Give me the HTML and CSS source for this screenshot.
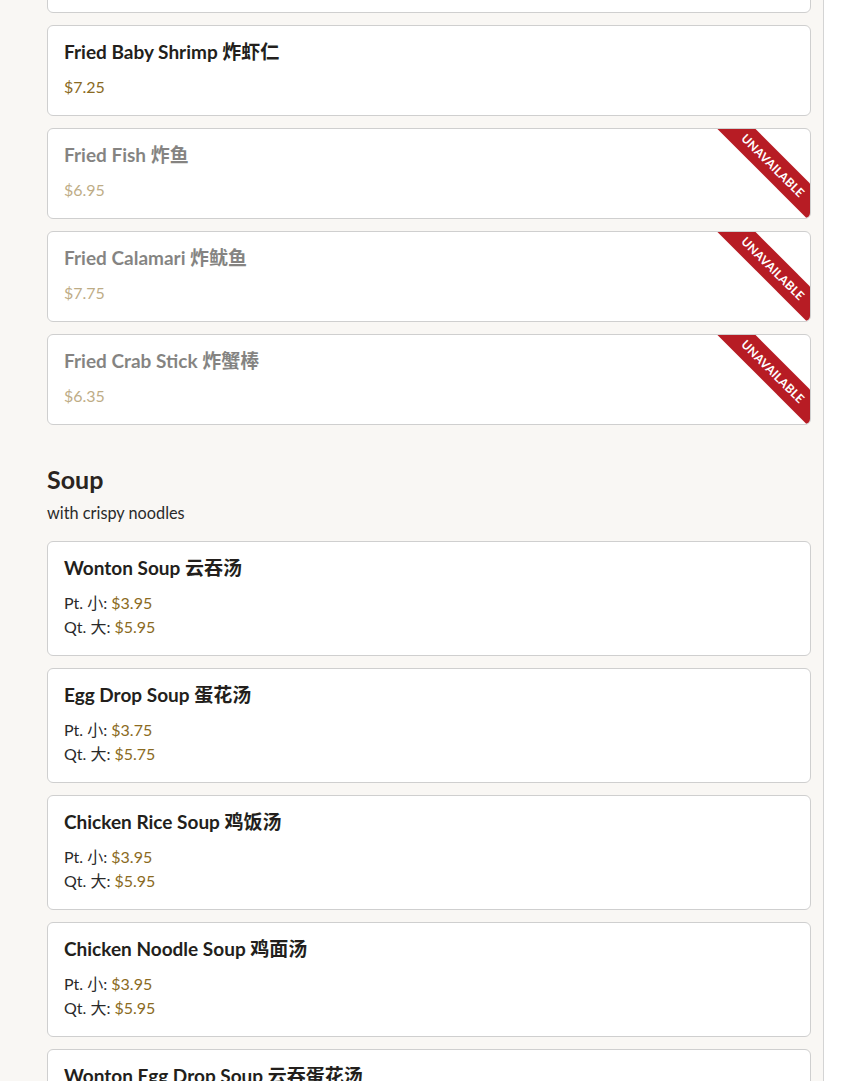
FILE: index.html
```html
<!DOCTYPE html>
<html lang="en">
<head>
<meta charset="utf-8">
<title>Menu</title>
<link rel="stylesheet" href="styles.css">
</head>
<body>
<div class="layout">
  <main class="menu">
    <div class="scroller">
      <section class="category">
        <div class="items">
          <article class="card">
            <h3 class="name">Fried Jumbo Shrimp 炸大虾</h3>
            <div class="price">$8.95</div>
          </article>
          <article class="card">
            <h3 class="name">Fried Baby Shrimp 炸虾仁</h3>
            <div class="price">$7.25</div>
          </article>
          <article class="card unavailable">
            <h3 class="name">Fried Fish 炸鱼</h3>
            <div class="price">$6.95</div>
            <span class="ribbon">Unavailable</span>
          </article>
          <article class="card unavailable">
            <h3 class="name">Fried Calamari 炸鱿鱼</h3>
            <div class="price">$7.75</div>
            <span class="ribbon">Unavailable</span>
          </article>
          <article class="card unavailable">
            <h3 class="name">Fried Crab Stick 炸蟹棒</h3>
            <div class="price">$6.35</div>
            <span class="ribbon">Unavailable</span>
          </article>
        </div>
      </section>

      <section class="category">
        <h2 class="cat-title">Soup</h2>
        <p class="cat-desc">with crispy noodles</p>
        <div class="items">
          <article class="card">
            <h3 class="name">Wonton Soup 云吞汤</h3>
            <div class="sizes">
              <div class="size">Pt. 小: <span class="amt">$3.95</span></div>
              <div class="size">Qt. 大: <span class="amt">$5.95</span></div>
            </div>
          </article>
          <article class="card">
            <h3 class="name">Egg Drop Soup 蛋花汤</h3>
            <div class="sizes">
              <div class="size">Pt. 小: <span class="amt">$3.75</span></div>
              <div class="size">Qt. 大: <span class="amt">$5.75</span></div>
            </div>
          </article>
          <article class="card">
            <h3 class="name">Chicken Rice Soup 鸡饭汤</h3>
            <div class="sizes">
              <div class="size">Pt. 小: <span class="amt">$3.95</span></div>
              <div class="size">Qt. 大: <span class="amt">$5.95</span></div>
            </div>
          </article>
          <article class="card">
            <h3 class="name">Chicken Noodle Soup 鸡面汤</h3>
            <div class="sizes">
              <div class="size">Pt. 小: <span class="amt">$3.95</span></div>
              <div class="size">Qt. 大: <span class="amt">$5.95</span></div>
            </div>
          </article>
          <article class="card">
            <h3 class="name">Wonton Egg Drop Soup 云吞蛋花汤</h3>
            <div class="sizes">
              <div class="size">Pt. 小: <span class="amt">$3.95</span></div>
              <div class="size">Qt. 大: <span class="amt">$5.95</span></div>
            </div>
          </article>
        </div>
      </section>
    </div>
  </main>
  <aside class="side"></aside>
</div>
</body>
</html>
```

FILE: styles.css
```css
* { box-sizing: border-box; }

html, body {
  margin: 0;
  padding: 0;
  height: 1081px;
  overflow: hidden;
  background: #ffffff;
  font-family: "Lato", "Noto Sans CJK SC", sans-serif;
  color: #222222;
}

.layout {
  display: grid;
  grid-template-columns: 824px 1fr;
  height: 1081px;
}

.menu {
  background: #f9f7f4;
  border-right: 1px solid #d4d4d4;
  padding: 0 12px 0 47px;
  overflow: hidden;
}

.scroller {
  margin-top: -78px;
}

.category + .category {
  padding-top: 40px;
}

.cat-title {
  margin: 0;
  font-size: 25px;
  line-height: 29px;
  font-weight: 700;
  color: #2a2420;
}

.cat-desc {
  margin: 7px 0 0;
  font-size: 16.3px;
  line-height: 24px;
  color: #2a2a2a;
}

.cat-desc + .items {
  margin-top: 16px;
}

.items {
  display: flex;
  flex-direction: column;
  gap: 12px;
}

.card {
  position: relative;
  overflow: hidden;
  background: #ffffff;
  border: 1px solid #cfcfcf;
  border-radius: 6px;
  padding: 16px;
}

.name {
  margin: 0;
  font-size: 19px;
  line-height: 20px;
  font-weight: 700;
  color: #231f1c;
}

.price {
  margin-top: 13px;
  font-size: 16px;
  line-height: 24px;
  color: #8a6a22;
}

.sizes {
  margin-top: 13px;
}

.size {
  font-size: 16px;
  line-height: 24px;
  color: #2a2a2a;
}

.amt {
  color: #8a6a22;
}

.unavailable .name,
.unavailable .price {
  opacity: 0.55;
}

.ribbon {
  position: absolute;
  top: 23px;
  right: -43px;
  width: 160px;
  height: 27px;
  line-height: 27px;
  background: #b71c24;
  color: #ffffff;
  font-size: 12px;
  font-weight: 700;
  text-transform: uppercase;
  text-align: center;
  letter-spacing: 0.2px;
  transform: rotate(45deg);
}

.side {
  background: #ffffff;
}
```
